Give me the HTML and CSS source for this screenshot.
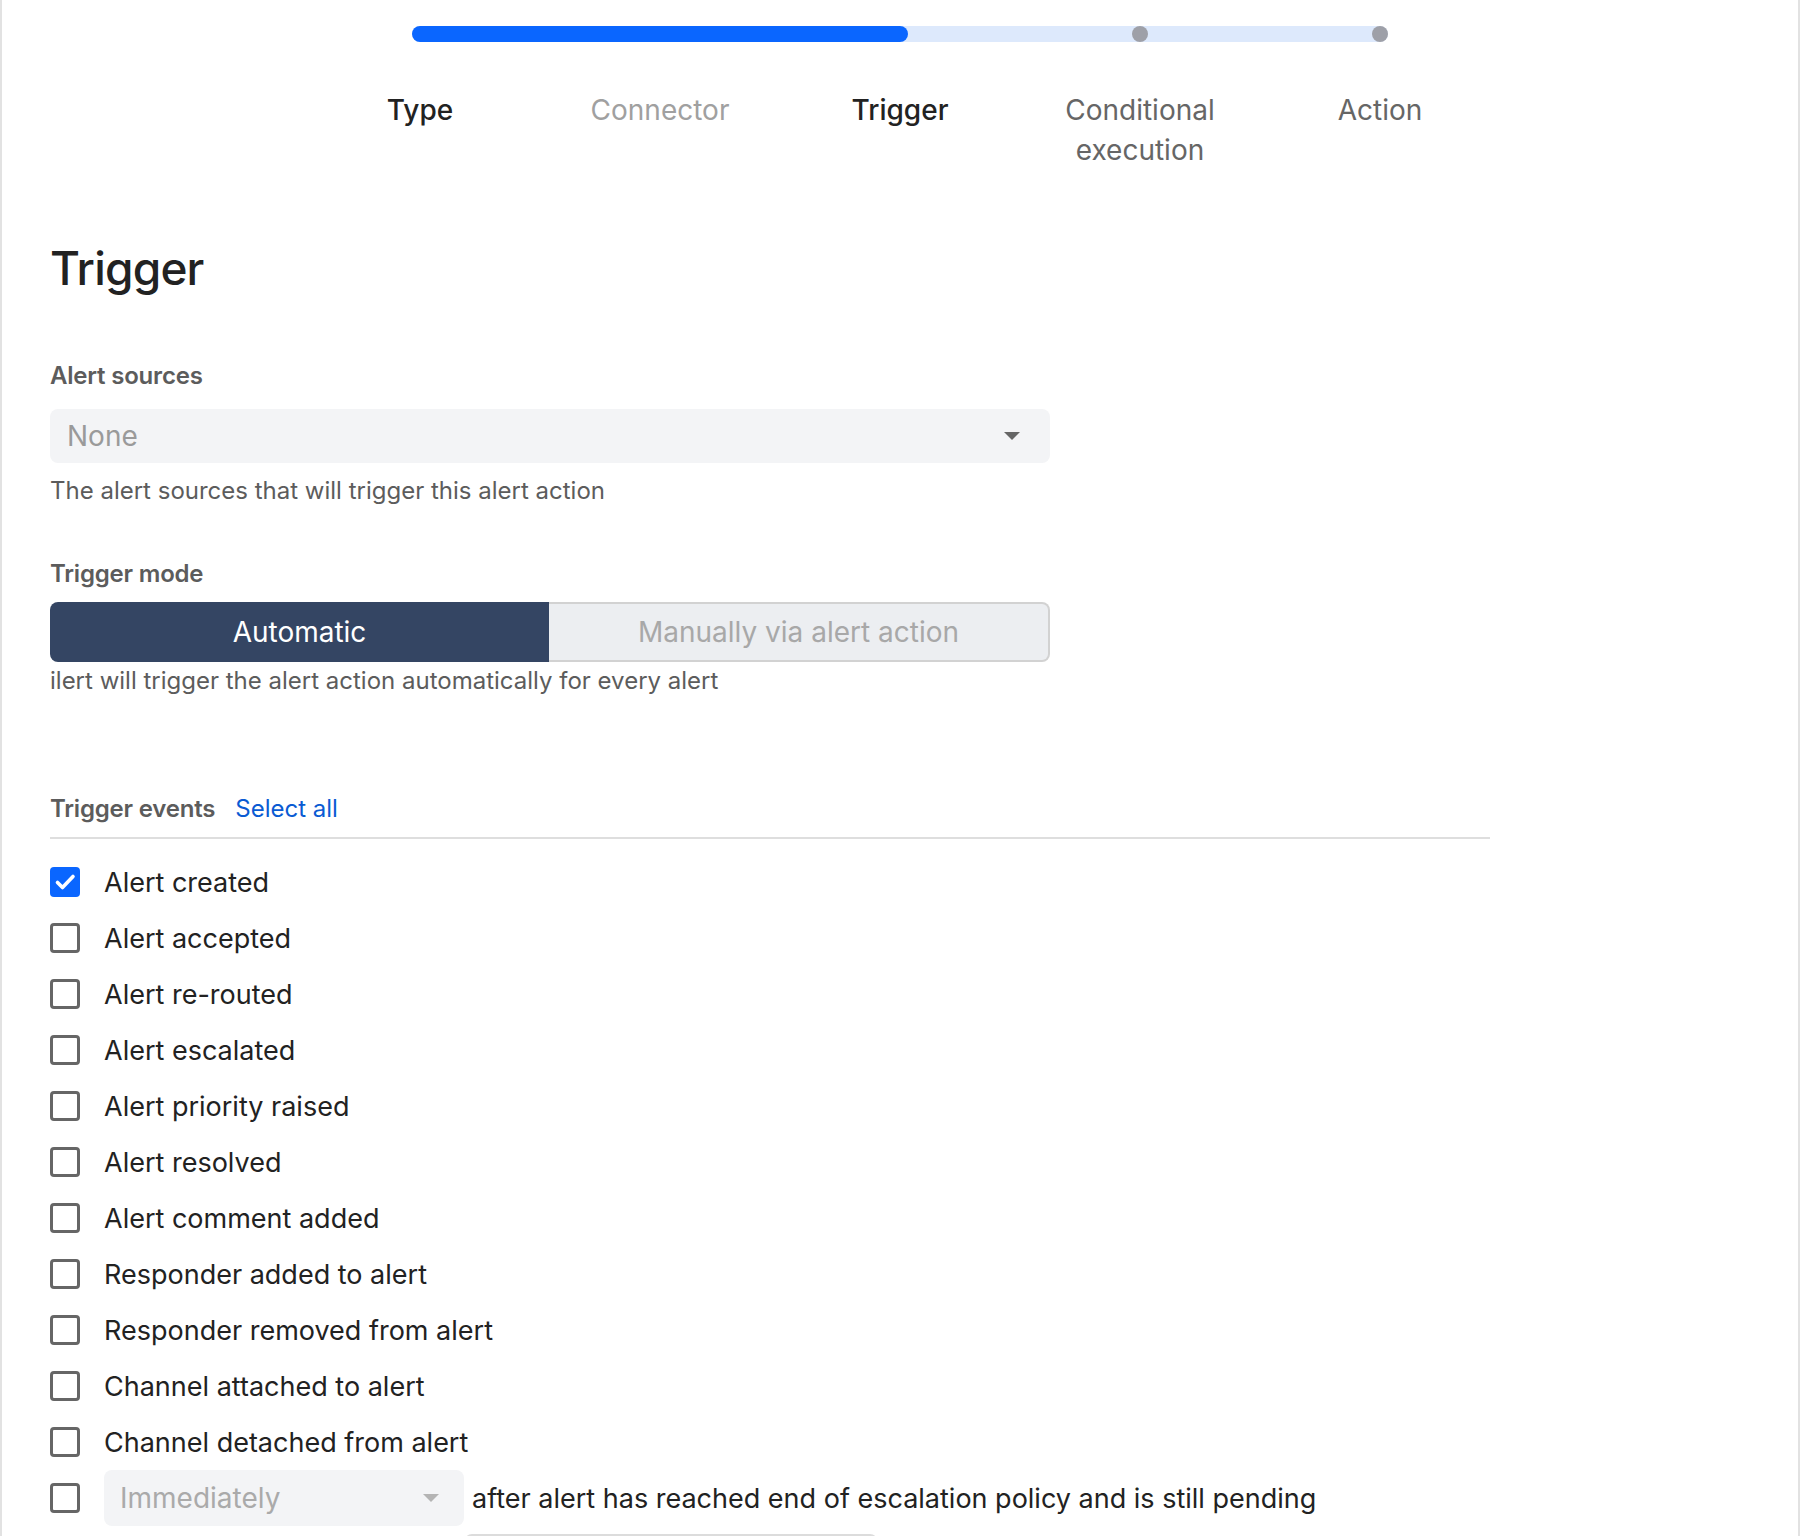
FILE: index.html
```html
<!doctype html>
<html>
<head>
  <meta charset="utf-8">
  <link rel="stylesheet" href="styles.css">
</head>
<body>
  <div class="page">
    <div class="stepper">
      <div class="track">
        <div class="fill"></div>
        <div class="dots">
          <span class="dot on"></span>
          <span class="dot on"></span>
          <span class="dot on"></span>
          <span class="dot"></span>
          <span class="dot"></span>
        </div>
      </div>
      <ol class="steps">
        <li class="done">Type</li>
        <li class="skipped">Connector</li>
        <li class="current">Trigger</li>
        <li>Conditional execution</li>
        <li>Action</li>
      </ol>
    </div>

    <main class="form">
      <h1>Trigger</h1>

      <div class="field">
        <label class="field-label">Alert sources</label>
        <div class="select">
          <span>None</span>
          <span class="caret"></span>
        </div>
        <p class="hint">The alert sources that will trigger this alert action</p>
      </div>

      <div class="field mode">
        <label class="field-label">Trigger mode</label>
        <div class="segmented">
          <div class="seg active">Automatic</div>
          <div class="seg">Manually via alert action</div>
        </div>
        <p class="hint tight">ilert will trigger the alert action automatically for every alert</p>
      </div>

      <div class="events">
        <div class="events-head">
          <span class="field-label">Trigger events</span>
          <a class="link">Select all</a>
        </div>
        <ul class="event-list">
          <li class="row"><span class="check checked"><svg width="30" height="30" viewBox="0 0 30 30"><path d="M7.5 15.5l5 5L23 9.5" fill="none" stroke="#fff" stroke-width="3.6" stroke-linecap="round" stroke-linejoin="round"/></svg></span>Alert created</li>
          <li class="row"><span class="check"></span>Alert accepted</li>
          <li class="row"><span class="check"></span>Alert re-routed</li>
          <li class="row"><span class="check"></span>Alert escalated</li>
          <li class="row"><span class="check"></span>Alert priority raised</li>
          <li class="row"><span class="check"></span>Alert resolved</li>
          <li class="row"><span class="check"></span>Alert comment added</li>
          <li class="row"><span class="check"></span>Responder added to alert</li>
          <li class="row"><span class="check"></span>Responder removed from alert</li>
          <li class="row"><span class="check"></span>Channel attached to alert</li>
          <li class="row"><span class="check"></span>Channel detached from alert</li>
          <li class="row">
            <span class="check"></span>
            <span class="inline">
              <span class="select small">
                <span>Immediately</span>
                <span class="caret light"></span>
              </span>
              after alert has reached end of escalation policy and is still pending
            </span>
          </li>
        </ul>
        <div class="next-box"></div>
      </div>
    </main>
  </div>
</body>
</html>
```

FILE: styles.css
```css
html, body {
  margin: 0;
  height: 100%;
  overflow: hidden;
  font-family: Inter, "Noto Sans", sans-serif;
  color: #222;
  background: #fff;
}
.page {
  min-height: 100%;
  box-sizing: border-box;
  border-left: 2px solid #e2e2e2;
  border-right: 2px solid #e2e2e2;
}

/* stepper */
.stepper {
  width: 1200px;
  margin: 0 auto;
  padding-top: 26px;
}
.track {
  position: relative;
  margin: 0 112px;
  height: 16px;
  border-radius: 8px;
  background: #dde9fc;
}
.fill {
  position: absolute;
  left: 0;
  top: 0;
  width: 496px;
  height: 16px;
  border-radius: 8px;
  background: #0a66ff;
}
.dots {
  position: relative;
  display: flex;
  justify-content: space-between;
}
.dot {
  width: 16px;
  height: 16px;
  border-radius: 50%;
  background: #9ea0a8;
}
.dot.on {
  background: transparent;
}
.steps {
  display: flex;
  margin: 48px 0 0;
  padding: 0;
  list-style: none;
}
.steps li {
  width: 240px;
  box-sizing: border-box;
  padding: 0 40px;
  text-align: center;
  font-size: 28px;
  line-height: 40px;
  color: #666;
}
.steps .done, .steps .current {
  color: #222;
  font-weight: 500;
}
.steps .skipped {
  color: #a0a0a0;
}

/* form */
.form {
  padding-left: 48px;
}
h1 {
  margin: 70px 0 0;
  font-size: 46px;
  line-height: 56px;
  font-weight: 500;
  letter-spacing: -0.8px;
  color: #222;
}
.field {
  margin-top: 64px;
  width: 1000px;
}
.field.mode {
  margin-top: 51px;
}
.field-label {
  display: block;
  font-size: 24px;
  line-height: 32px;
  font-weight: 600;
  color: #5c5c5c;
  letter-spacing: -0.2px;
}
.select {
  display: flex;
  align-items: center;
  justify-content: space-between;
  margin-top: 17px;
  height: 54px;
  box-sizing: border-box;
  padding: 0 30px 0 17px;
  border-radius: 8px;
  background: #f3f4f6;
  font-size: 28px;
  color: #9a9a9a;
}
.caret {
  width: 0;
  height: 0;
  border-left: 8px solid transparent;
  border-right: 8px solid transparent;
  border-top: 8px solid #666;
}
.caret.light {
  border-top-color: #b4b4b4;
}
.hint {
  margin: 12px 0 0;
  font-size: 24px;
  line-height: 32px;
  color: #5c5c5c;
}
.hint.tight {
  margin-top: 3px;
}
.segmented {
  display: flex;
  margin-top: 12px;
  height: 60px;
}
.seg {
  flex: 1;
  display: flex;
  align-items: center;
  justify-content: center;
  font-size: 28px;
  background: #eceef1;
  color: #a8a8a8;
  border: 2px solid #d2d2d2;
  border-left: none;
  border-radius: 0 8px 8px 0;
}
.seg.active {
  background: #344563;
  color: #fff;
  border: none;
  border-radius: 8px 0 0 8px;
}

/* events */
.events {
  margin-top: 96px;
  width: 1440px;
}
.events-head {
  display: flex;
  align-items: baseline;
  gap: 20px;
  padding-bottom: 12px;
  border-bottom: 2px solid #dedede;
}
.link {
  font-size: 24px;
  line-height: 32px;
  color: #0a5bd3;
  cursor: pointer;
}
.event-list {
  margin: 15px 0 0;
  padding: 0;
  list-style: none;
}
.row {
  display: flex;
  align-items: center;
  gap: 24px;
  height: 56px;
  font-size: 27px;
  color: #222;
}
.check {
  flex: none;
  width: 30px;
  height: 30px;
  box-sizing: border-box;
  border: 3px solid #666;
  border-radius: 4px;
}
.check.checked {
  border: none;
  background: #0a66ff;
}
.check svg {
  display: block;
}
.inline {
  display: flex;
  align-items: center;
  gap: 8px;
}
.select.small {
  margin-top: 0;
  width: 360px;
  height: 56px;
  padding: 0 25px 0 16px;
  color: #aaa;
}
.next-box {
  margin: 8px 0 0 414px;
  width: 414px;
  height: 56px;
  box-sizing: border-box;
  border: 2px solid #dcdcdc;
  border-radius: 8px;
}
```
